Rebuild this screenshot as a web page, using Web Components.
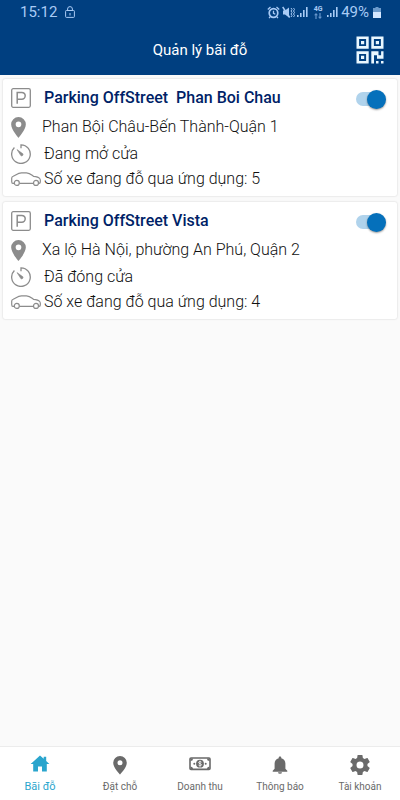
<!DOCTYPE html>
<html lang="vi">
<head>
<meta charset="utf-8">
<meta name="viewport" content="width=device-width, initial-scale=1">
<title>Quản lý bãi đỗ</title>
<style>
body { margin: 0; font-family: Roboto, "Noto Sans", sans-serif; color: #111; background: #fafafa; }
</style>
</head>
<body>
<parking-app>
  <status-bar slot="top"></status-bar>
  <app-header slot="top">Quản lý bãi đỗ</app-header>
  <parking-card>
    <span slot="name">Parking OffStreet&nbsp; Phan Boi Chau</span>
    <span slot="address">Phan Bội Châu-Bến Thành-Quận 1</span>
    <span slot="state">Đang mở cửa</span>
    <span slot="count">Số xe đang đỗ qua ứng dụng: 5</span>
  </parking-card>
  <parking-card>
    <span slot="name">Parking OffStreet Vista</span>
    <span slot="address">Xa lộ Hà Nội, phường An Phú, Quận 2</span>
    <span slot="state">Đã đóng cửa</span>
    <span slot="count">Số xe đang đỗ qua ứng dụng: 4</span>
  </parking-card>
  <tab-bar slot="bottom">
    <tab-item icon="home" active>Bãi đỗ</tab-item>
    <tab-item icon="pin">Đặt chỗ</tab-item>
    <tab-item icon="money">Doanh thu</tab-item>
    <tab-item icon="bell">Thông báo</tab-item>
    <tab-item icon="gear">Tài khoản</tab-item>
  </tab-bar>
</parking-app>
<script>
const define = (name, html, setup) => customElements.define(name, class extends HTMLElement {
  connectedCallback() {
    if (this.shadowRoot) return;
    this.attachShadow({ mode: 'open' }).innerHTML = html;
    if (setup) setup(this, this.shadowRoot);
  }
});

const ICONS = {
  parking: `<svg width="20" height="20" viewBox="0 0 20 20" fill="none" stroke="#8c8c8c"><rect x=".7" y=".7" width="18.6" height="18.6" rx="1.5" stroke-width="1.3"/><path d="M6.200 15.800V4.400h4.600a3.400 3.400 0 0 1 0 6.800H6.200" stroke-width="1.500"/></svg>`,
  place: `<svg width="15" height="21" viewBox="0 0 14 20" fill="#8c8c8c"><path fill-rule="evenodd" d="M7 0a7 7 0 0 0-7 7c0 5.2 7 13 7 13s7-7.800 7-13a7 7 0 0 0-7-7zm0 4.300a2.700 2.700 0 1 1 0 5.400 2.700 2.700 0 0 1 0-5.400z"/></svg>`,
  timer: `<svg width="20" height="20" viewBox="0 0 20 20" fill="none" stroke="#8c8c8c" stroke-width="1.300"><path d="M10 4.200V.8a9.300 9.300 0 1 1-6.600 2.700"/><path d="M6 5.600l5.600 4a1.300 1.300 0 0 1-1.800 1.900z" fill="#8c8c8c" stroke-width=".6"/></svg>`,
  car: `<svg width="30" height="14" viewBox="0 0 30 14" fill="none" stroke="#8c8c8c" stroke-width="1.200"><path d="M3.200 11.300H1.800C.8 11.300.7 10.500.7 9.400V6.200c0-1 .5-1.500 1.500-1.900C5 3 7 .8 10.500.8h5c3 0 5 2 7 3.500 3 .3 5.200.9 6.200 2.200.8 1 .7 2.700.5 3.800-.1.700-.6 1-1.400 1M8.400 11.300h13.800"/><circle cx="5.800" cy="10.900" r="2.500"/><circle cx="25" cy="10.900" r="2.500"/></svg>`,
  home: `<svg width="20" height="20" viewBox="0 0 20 20" fill="currentColor"><path d="M10 .5L.6 9.100h2.600V16.500H8v-5h4v5h4.800V9.100h2.600l-3.200-3V1.800h-2.500v2z"/></svg>`,
  pin: `<svg width="20" height="20" viewBox="0 0 20 20" fill="currentColor"><path fill-rule="evenodd" d="M10 1a6.800 6.800 0 0 0-6.800 6.800c0 5 6.800 11.700 6.800 11.700s6.800-6.700 6.800-11.700A6.800 6.800 0 0 0 10 1zm0 4.300a2.500 2.500 0 1 1 0 5 2.500 2.500 0 0 1 0-5z"/></svg>`,
  money: `<svg width="22" height="20" viewBox="0 0 22 20"><rect x="1" y="3" width="20" height="11.400" rx="1" fill="none" stroke="currentColor" stroke-width="1.600"/><path d="M1.500 3.500h2.600a2.600 2.600 0 0 1-2.600 2.500zM20.500 3.500h-2.600a2.600 2.600 0 0 0 2.600 2.500zM1.500 14h2.600a2.600 2.600 0 0 0-2.600-2.500zM20.500 14h-2.600a2.600 2.600 0 0 1 2.600-2.500z" fill="currentColor"/><circle cx="11" cy="8.700" r="3.900" fill="currentColor"/><circle cx="5.300" cy="8.700" r="1" fill="currentColor"/><circle cx="16.700" cy="8.700" r="1" fill="currentColor"/><path d="M12.500 7.200c-.6-.8-2.900-.8-2.900.4 0 1.300 2.900.8 2.900 2.200 0 1.200-2.400 1.200-3 .3M11 5.700v6" fill="none" stroke="#fff" stroke-width=".8"/></svg>`,
  bell: `<svg width="20" height="20" viewBox="0 0 20 20" fill="currentColor"><path d="M10 1.500c-.8 0-1.300.5-1.300 1.300v.4C6 3.800 4.600 6 4.600 8.700v5l-1.900 2v1h14.600v-1l-1.900-2v-5c0-2.700-1.400-4.900-4.100-5.500v-.4c0-.8-.5-1.300-1.300-1.300zM8 17.300h4a2 1.500 0 0 1-4 0z"/></svg>`,
  gear: `<svg width="20" height="20" viewBox="2 2 20 20" fill="currentColor"><path d="M19.430 12.980c.04-.32.07-.64.07-.98s-.03-.66-.07-.98l2.110-1.650c.19-.15.24-.42.12-.64l-2-3.460c-.12-.22-.39-.3-.61-.22l-2.490 1c-.52-.4-1.080-.73-1.690-.98l-.38-2.650C14.460 2.180 14.250 2 14 2h-4c-.25 0-.46.18-.49.42l-.38 2.650c-.61.25-1.170.59-1.690.98l-2.490-1c-.23-.09-.49 0-.61.22l-2 3.460c-.13.22-.07.49.12.64l2.110 1.650c-.04.32-.07.65-.07.98s.03.66.07.98l-2.110 1.650c-.19.15-.24.42-.12.64l2 3.460c.12.22.39.3.61.22l2.490-1c.52.4 1.080.73 1.690.98l.38 2.650c.03.24.24.42.49.42h4c.25 0 .46-.18.49-.42l.38-2.650c.61-.25 1.170-.59 1.690-.98l2.490 1c.23.09.49 0 .61-.22l2-3.460c.12-.22.07-.49-.12-.64l-2.110-1.650zM12 15.500a3.500 3.500 0 1 1 0-7 3.500 3.500 0 0 1 0 7z"/></svg>`
};
const signal = `<svg width="12" height="12" viewBox="0 0 12 12" fill="currentColor"><path d="M0 9h1.600v2H0zM3 7h1.600v4H3zM6 4h1.600v7H6zM9 1h1.600v10H9z"/></svg>`;

define('parking-app', `
  <style>
    :host { display: flex; flex-direction: column; min-height: 100vh; }
    main { flex: 1; display: flex; flex-direction: column; gap: 6px; padding: 4px 3px; }
  </style>
  <slot name="top"></slot>
  <main><slot></slot></main>
  <slot name="bottom"></slot>`);

define('status-bar', `
  <style>
    :host { display: flex; align-items: center; justify-content: space-between; height: 24px; padding: 0 19px 0 20px; background: #003f80; color: #a9cbf5; font-size: 15px; line-height: 24px; }
    div { display: flex; align-items: center; gap: 2px; }
    .left { gap: 8px; }
    .net { display: flex; flex-direction: column; align-items: center; width: 14px; font-size: 7px; font-weight: 700; line-height: 7px; }
    .pct { padding-right: 2px; }
  </style>
  <div class="left"><span>15:12</span>
    <svg width="10" height="12" viewBox="0 0 10 12" fill="none" stroke="currentColor"><rect x=".6" y="4.500" width="8.800" height="6.900" rx=".8"/><path d="M2.600 4.500V3a2.400 2.400 0 0 1 4.800 0v1.500M5 7v2.500"/></svg>
  </div>
  <div>
    <svg width="13" height="13" viewBox="0 0 13 13" fill="none" stroke="currentColor"><circle cx="6.500" cy="7" r="4.300" stroke-width="1.700"/><path d="M6.500 4.800V7.300l1.800 1M.8 3.500L3.500 1M12.200 3.500L9.500 1M3.300 10.500l-1.200 1.700M9.700 10.500l1.200 1.700" stroke-width="1.300"/></svg>
    <svg width="13" height="13" viewBox="0 0 13 13" fill="none" stroke="currentColor"><path d="M1 4.500h2l4-3v10l-4-3H1z" fill="currentColor" stroke="none"/><path d="M.7 1l7 10.500" stroke-width="1.500"/><path d="M9 2l1 1.500L9 5l1 1.500L9 8l1 1.500-1 1.500M11.500 2l1 1.500-1 1.500 1 1.500-1 1.500 1 1.500-1 1.500"/></svg>
    ${signal}
    <span class="net">4G<svg width="8" height="6" viewBox="0 0 8 6" fill="#6696cc"><path d="M2 0l2 2.300H2.600V6H1.400V2.300H0zM6 6L4 3.700h1.400V0h1.200v3.700H8z"/></svg></span>
    ${signal}
    <span class="pct">49%</span>
    <svg width="8" height="11" viewBox="0 0 8 11"><path d="M2.500 0h3v1H8v4H0V1h2.500z" fill="#6c9acb"/><path d="M0 5h8v6H0z" fill="#d5e7ff"/></svg>
  </div>`);

define('app-header', `
  <style>
    :host { display: grid; grid-template-columns: 1fr auto 1fr; align-items: center; height: 51px; padding: 0 16px; background: #003f80; color: #fff; }
    h1 { grid-column: 2; margin: 0; font-size: 15px; line-height: 20px; font-weight: 400; }
    button { justify-self: end; padding: 0; border: 0; background: none; color: #e9f7ff; display: flex; }
  </style>
  <h1><slot></slot></h1>
  <button type="button" aria-label="Quét mã QR">
    <svg width="28" height="28" viewBox="0 0 28 28" fill="none" stroke="currentColor" stroke-width="2.600"><path d="M1.800 1.800h9.600v9.600H1.800zM16.600 1.800h9.600v9.600h-9.600zM1.800 16.600h9.600v9.600H1.800z"/><path d="M5 5h3.200v3.200H5zM19.800 5H23v3.200h-3.200zM5 19.800h3.200V23H5zM15.300 15.300h7.200v4h2.600v-4h2.400v7.400h-6.500v-3.400H18V27.500h-2.700zM20 25h2.500v2.500H20zM25 25h2.500v2.500H25z" fill="currentColor" stroke="none"/></svg>
  </button>`);

define('toggle-switch', `
  <style>
    :host { display: flex; isolation: isolate; }
    input { appearance: none; box-sizing: border-box; display: flex; align-items: center; width: 30px; height: 20px; margin: 0; position: relative; }
    input::before { content: ""; width: 19px; height: 19px; border-radius: 50%; background: #aaa; box-shadow: 0 1px 2px #0006; }
    input::after { content: ""; position: absolute; z-index: -1; inset: 3px 4px 3px 0; border-radius: 7px; background: #b0d3ec; }
    input:checked { justify-content: flex-end; }
    input:checked::before { background: #0570bb; }
  </style>
  <input type="checkbox" role="switch" checked>`,
  (host, root) => root.querySelector('input').setAttribute('aria-label', host.getAttribute('label') || ''));

define('parking-card', `
  <style>
    :host { display: block; padding: 5px 11px 4px 8px; background: #fff; border-radius: 2px; box-shadow: 0 0 2px #0003; font-size: 16px; font-weight: 300; line-height: 20px; }
    div { display: flex; align-items: center; }
    svg { display: block; flex: none; }
    .title { height: 27px; gap: 13px; }
    toggle-switch { align-self: flex-end; padding-bottom: 2px; }
    h2 { flex: 1; margin: 0; font-size: 16px; line-height: 20px; font-weight: 500; color: #001f67; }
    .address { min-height: 32px; gap: 16px; }
    .state { min-height: 22px; gap: 13px; }
    .count { min-height: 27px; gap: 3px; }
  </style>
  <div class="title">${ICONS.parking}<h2><slot name="name"></slot></h2><toggle-switch label="Bật bãi đỗ"></toggle-switch></div>
  <div class="address">${ICONS.place}<slot name="address"></slot></div>
  <div class="state">${ICONS.timer}<slot name="state"></slot></div>
  <div class="count">${ICONS.car}<slot name="count"></slot></div>`);

define('tab-bar', `
  <style>
    :host { display: block; background: #fff; border-top: 1px solid #ececec; }
    nav { display: flex; }
    ::slotted(*) { flex: 1; }
  </style>
  <nav><slot></slot></nav>`);

define('tab-item', `
  <style>
    :host { display: block; color: #6a6a6a; }
    :host([active]) { color: #2aa5cd; }
    a { display: flex; flex-direction: column; align-items: center; gap: 4px; padding: 8px 0 5px; color: inherit; text-decoration: none; font-size: 10px; line-height: 16px; }
    :host([active]) a { font-size: 11px; }
    i { display: flex; align-items: center; height: 20px; }
  </style>
  <a href="#"><i></i><span><slot></slot></span></a>`,
  (host, root) => { root.querySelector('i').innerHTML = ICONS[host.getAttribute('icon')]; });
</script>
</body>
</html>
